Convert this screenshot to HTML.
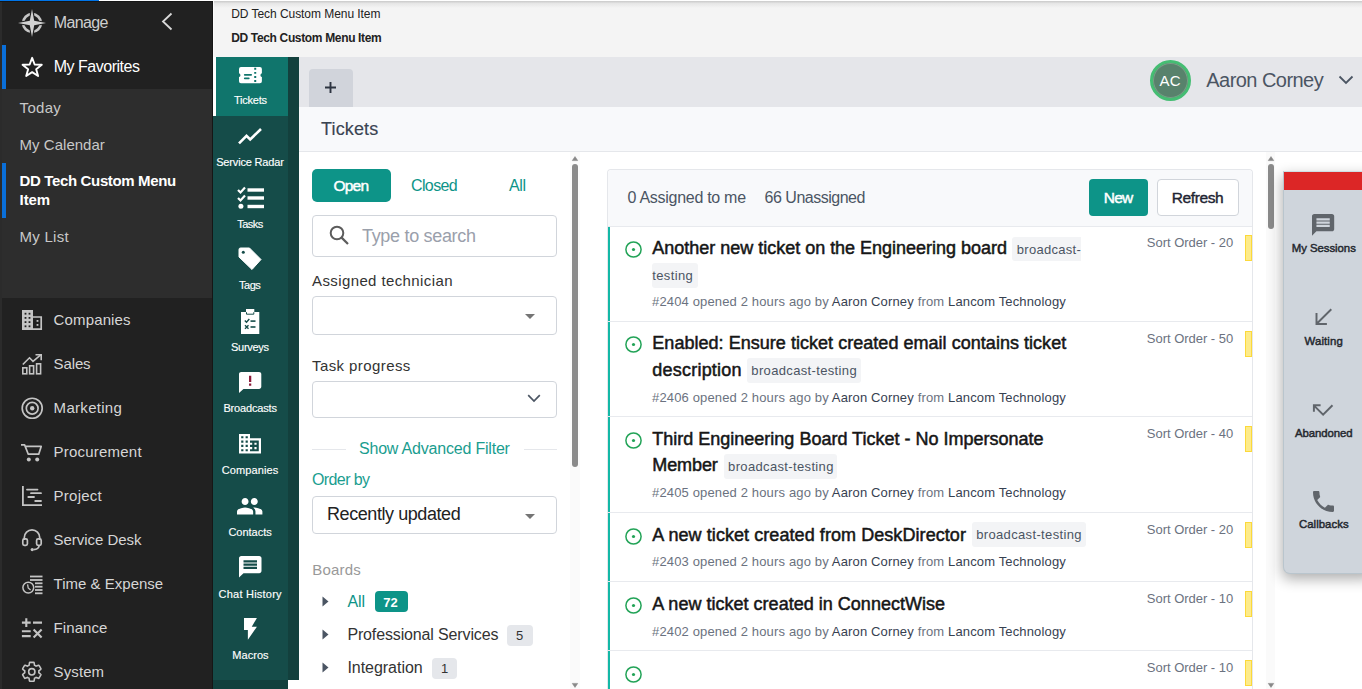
<!DOCTYPE html><html><head><meta charset="utf-8"><style>
html,body{margin:0;padding:0;width:1362px;height:689px;overflow:hidden;background:#fff}
body{position:relative;font-family:"Liberation Sans",sans-serif}
.t{position:absolute;white-space:nowrap;line-height:1}
.b{position:absolute}
svg.b{overflow:visible}
</style></head><body>
<div class="b" style="left:0px;top:0px;width:213px;height:689px;background:#212121"></div>
<div class="b" style="left:0px;top:89px;width:213px;height:209px;background:#2d2d2d"></div>
<div class="b" style="left:0px;top:0px;width:2px;height:689px;background:#2b2b2b"></div>
<div class="b" style="left:212px;top:0px;width:1px;height:689px;background:#161616"></div>
<div class="b" style="left:0px;top:0px;width:99px;height:1px;background:#0074e8"></div>
<div class="b" style="left:99px;top:0px;width:114px;height:1px;background:#ffffff"></div>
<div class="b" style="left:0px;top:1px;width:213px;height:1px;background:#161616"></div>
<svg class="b" style="left:18.2px;top:9.2px" width="28" height="28" viewBox="0 0 28 28">
<circle cx="14" cy="14" r="8.9" fill="none" stroke="#c6c6c6" stroke-width="2.6"/>
<path d="M14 0 L16.2 11.8 L28 14 L16.2 16.2 L14 28 L11.8 16.2 L0 14 L11.8 11.8 Z" fill="#d2d2d2" stroke="#212121" stroke-width="2.2" paint-order="stroke"/>
</svg>
<div class="t " style="left:53.70px;top:14.66px;font-size:16px;color:#cfcfcf;letter-spacing:-0.600px;">Manage</div>
<svg class="b" style="left:160px;top:12px" width="14" height="19" viewBox="0 0 14 19"><path d="M11.5 1.5 L3 9.5 L11.5 17.5" fill="none" stroke="#d9d9d9" stroke-width="1.8"/></svg>
<div class="b" style="left:2px;top:45px;width:4px;height:44px;background:#0a6fd9"></div>
<svg class="b" style="left:0;top:0" width="1" height="1"><path d="M32.15 57.80 L34.64 64.47 L41.76 64.78 L36.18 69.21 L38.09 76.07 L32.15 72.14 L26.21 76.07 L28.12 69.21 L22.54 64.78 L29.66 64.47Z" fill="none" stroke="#fff" stroke-width="1.9" stroke-linejoin="round"/></svg>
<div class="t " style="left:53.70px;top:58.56px;font-size:16px;color:#ffffff;letter-spacing:-0.482px;">My Favorites</div>
<div class="t " style="left:19.60px;top:100.30px;font-size:15px;color:#c8c8c8;letter-spacing:0.300px;">Today</div>
<div class="t " style="left:19.60px;top:137.30px;font-size:15px;color:#c8c8c8;letter-spacing:0.020px;">My Calendar</div>
<div class="b" style="left:2px;top:163px;width:4px;height:55px;background:#0a6fd9"></div>
<div class="t " style="left:19.60px;top:173.00px;font-size:15px;color:#ffffff;font-weight:bold;letter-spacing:-0.361px;">DD Tech Custom Menu</div>
<div class="t " style="left:19.60px;top:191.60px;font-size:15px;color:#ffffff;font-weight:bold;letter-spacing:-0.100px;">Item</div>
<div class="t " style="left:19.60px;top:228.80px;font-size:15px;color:#c8c8c8;letter-spacing:0.250px;">My List</div>
<div class="t " style="left:53.60px;top:312.10px;font-size:15px;color:#d6d6d6;letter-spacing:0.137px;">Companies</div>
<div class="t " style="left:53.60px;top:356.10px;font-size:15px;color:#d6d6d6;letter-spacing:-0.125px;">Sales</div>
<div class="t " style="left:53.60px;top:400.10px;font-size:15px;color:#d6d6d6;letter-spacing:0.300px;">Marketing</div>
<div class="t " style="left:53.60px;top:444.10px;font-size:15px;color:#d6d6d6;letter-spacing:0.210px;">Procurement</div>
<div class="t " style="left:53.60px;top:488.10px;font-size:15px;color:#d6d6d6;letter-spacing:0.233px;">Project</div>
<div class="t " style="left:53.60px;top:532.10px;font-size:15px;color:#d6d6d6;letter-spacing:-0.045px;">Service Desk</div>
<div class="t " style="left:53.60px;top:576.10px;font-size:15px;color:#d6d6d6;letter-spacing:0.008px;">Time &amp; Expense</div>
<div class="t " style="left:53.60px;top:620.10px;font-size:15px;color:#d6d6d6;letter-spacing:0.067px;">Finance</div>
<div class="t " style="left:53.60px;top:664.10px;font-size:15px;color:#d6d6d6;letter-spacing:0.100px;">System</div>
<svg class="b" style="left:22px;top:310px" width="20.00" height="20.00" viewBox="0 0 20 20" preserveAspectRatio="none"><path d="M0 0H11V20H0Z" fill="#c4c4c4"/><path d="M10.5 7H19.2V19.2H10.5" fill="none" stroke="#c4c4c4" stroke-width="1.7"/><rect x="2.6" y="2.8" width="1.8" height="1.8" fill="#212121"/><rect x="2.6" y="7" width="1.8" height="1.8" fill="#212121"/><rect x="2.6" y="11.2" width="1.8" height="1.8" fill="#212121"/><rect x="2.6" y="15.4" width="1.8" height="1.8" fill="#212121"/><rect x="6.6" y="2.8" width="1.8" height="1.8" fill="#212121"/><rect x="6.6" y="7" width="1.8" height="1.8" fill="#212121"/><rect x="6.6" y="11.2" width="1.8" height="1.8" fill="#212121"/><rect x="6.6" y="15.4" width="1.8" height="1.8" fill="#212121"/><rect x="14.6" y="10" width="1.8" height="1.8" fill="#c4c4c4"/><rect x="14.6" y="14" width="1.8" height="1.8" fill="#c4c4c4"/></svg>
<svg class="b" style="left:22px;top:353.5px" width="20.00" height="20.50" viewBox="0 0 20 20.5" preserveAspectRatio="none"><path d="M0.8 10.5 L7.5 3.8 L11 7.3 L18.7 0.9" fill="none" stroke="#c4c4c4" stroke-width="1.6"/><path d="M13.5 0.8H19.2V6.3" fill="none" stroke="#c4c4c4" stroke-width="1.6"/><rect x="0.8" y="13.8" width="4" height="6" fill="none" stroke="#c4c4c4" stroke-width="1.6"/><rect x="7.6" y="11.8" width="4" height="8" fill="none" stroke="#c4c4c4" stroke-width="1.6"/><rect x="14.6" y="9.8" width="4" height="10" fill="none" stroke="#c4c4c4" stroke-width="1.6"/></svg>
<svg class="b" style="left:21px;top:397px" width="23" height="23" viewBox="0 0 23 23"><circle cx="11.2" cy="11.25" r="10" fill="none" stroke="#c4c4c4" stroke-width="1.7"/><circle cx="11.2" cy="11.25" r="5.9" fill="none" stroke="#c4c4c4" stroke-width="1.7"/><circle cx="11.2" cy="11.25" r="2.2" fill="#c4c4c4"/></svg>
<svg class="b" style="left:21px;top:443.5px" width="21.00" height="17.50" viewBox="0 0 21 17.5" preserveAspectRatio="none"><path d="M0 0.9H3.6L7.3 10.2H17.7L20.2 2.4H4.6" fill="none" stroke="#c4c4c4" stroke-width="1.7" stroke-linejoin="round"/><circle cx="7.8" cy="15.4" r="2" fill="#c4c4c4"/><circle cx="16.2" cy="15.4" r="2" fill="#c4c4c4"/></svg>
<svg class="b" style="left:22px;top:486px" width="20.00" height="20.00" viewBox="0 0 20 20" preserveAspectRatio="none"><path d="M0.9 0V19.1H20" fill="none" stroke="#c4c4c4" stroke-width="1.8"/><path d="M5 3.6H15.5M9 7.2H19M6.3 11H12M13.2 15H19" stroke="#c4c4c4" stroke-width="1.8" stroke-linecap="round"/></svg>
<svg class="b" style="left:18px;top:525px" width="28" height="30" viewBox="18 525 28 30"><path d="M24.3 540V537.5A7.7 7.7 0 0 1 39.7 537.5V540" fill="none" stroke="#c4c4c4" stroke-width="1.7"/><rect x="22.8" y="538.8" width="4.6" height="6.6" rx="1.6" fill="none" stroke="#c4c4c4" stroke-width="1.7"/><rect x="36.6" y="538.8" width="4.6" height="6.6" rx="1.6" fill="none" stroke="#c4c4c4" stroke-width="1.7"/><path d="M39.2 545.5Q38.8 549.3 33.5 549.6" fill="none" stroke="#c4c4c4" stroke-width="1.7"/><circle cx="32.2" cy="549.6" r="1.6" fill="#c4c4c4"/><path d="M31.8 538.5V546" stroke="#c4c4c4" stroke-width="0" /></svg>
<svg class="b" style="left:18px;top:570px" width="28" height="28" viewBox="18 570 28 28"><circle cx="28.3" cy="587.6" r="5.4" fill="none" stroke="#c4c4c4" stroke-width="1.5"/><path d="M27.6 584.3L28.2 588L30.6 590" fill="none" stroke="#c4c4c4" stroke-width="1.3"/><rect x="30" y="575.6" width="12.5" height="1.8" fill="#c4c4c4"/><rect x="30" y="579.1" width="12.5" height="1.8" fill="#c4c4c4"/><rect x="35" y="582.4" width="7.5" height="1.8" fill="#c4c4c4"/><rect x="35" y="585.8000000000001" width="7.5" height="1.8" fill="#c4c4c4"/><rect x="35" y="589.1" width="7.5" height="1.8" fill="#c4c4c4"/><rect x="35" y="592.4" width="7.5" height="1.8" fill="#c4c4c4"/></svg>
<svg class="b" style="left:18px;top:612px" width="28" height="30" viewBox="18 612 28 30"><path d="M26.3 618.2V627M21.9 622.6H30.7M33 622.6H42M21.9 631.2H30.7M21.9 636.1H30.7M33.6 629.4L41.6 637.6M41.6 629.4L33.6 637.6" stroke="#c4c4c4" stroke-width="2.1"/></svg>
<svg class="b" style="left:20.2px;top:660.2px" width="23.6" height="23.6" viewBox="0 0 24 24"><path d="M19.14 12.94c.04-.3.06-.61.06-.94 0-.32-.02-.64-.07-.94l2.03-1.58c.18-.14.23-.41.12-.61l-1.92-3.32c-.12-.22-.37-.29-.59-.22l-2.39.96c-.5-.38-1.03-.7-1.62-.94l-.36-2.54c-.04-.24-.24-.41-.48-.41h-3.84c-.24 0-.43.17-.47.41l-.36 2.54c-.59.24-1.13.57-1.62.94l-2.39-.96c-.22-.08-.47 0-.59.22L2.74 8.87c-.12.21-.08.47.12.61l2.03 1.58c-.05.3-.09.63-.09.94s.02.64.07.94l-2.03 1.58c-.18.14-.23.41-.12.61l1.92 3.32c.12.22.37.29.59.22l2.39-.96c.5.38 1.03.7 1.62.94l.36 2.54c.05.24.24.41.48.41h3.84c.24 0 .44-.17.47-.41l.36-2.54c.59-.24 1.13-.56 1.62-.94l2.39.96c.22.08.47 0 .59-.22l1.92-3.32c.12-.22.07-.47-.12-.61l-2.01-1.58z" fill="none" stroke="#c4c4c4" stroke-width="1.6"/><circle cx="12" cy="12" r="3.2" fill="none" stroke="#c4c4c4" stroke-width="1.6"/></svg>
<div class="b" style="left:213px;top:0px;width:1149px;height:57px;background:#f4f4f4"></div>
<div class="b" style="left:213px;top:1px;width:1149px;height:7px;background:linear-gradient(#c9c9c9,#e6e6e6 35%,#f4f4f4)"></div>
<div class="b" style="left:213px;top:0px;width:1149px;height:1px;background:#ffffff"></div>
<div class="b" style="left:213px;top:1px;width:1px;height:56px;background:#fafafa"></div>
<div class="t " style="left:231.20px;top:7.64px;font-size:12px;color:#222;letter-spacing:-0.052px;">DD Tech Custom Menu Item</div>
<div class="t " style="left:231.20px;top:31.84px;font-size:12px;color:#222;font-weight:bold;letter-spacing:-0.343px;">DD Tech Custom Menu Item</div>
<div class="b" style="left:213px;top:57px;width:86px;height:632px;background:#13403d"></div>
<div class="b" style="left:213px;top:57px;width:75px;height:623px;background:#154c49"></div>
<div class="b" style="left:213px;top:680px;width:75px;height:9px;background:#12403d"></div>
<div class="b" style="left:288px;top:680px;width:11px;height:9px;background:#ffffff"></div>
<div class="b" style="left:213px;top:57px;width:3px;height:59px;background:#ffffff"></div>
<div class="b" style="left:216px;top:57px;width:72px;height:59px;background:#10756c"></div>
<div class="t " style="left:233.90px;top:95.29px;font-size:11px;color:#ffffff;-webkit-text-stroke:0.15px #ffffff;letter-spacing:-0.217px;">Tickets</div>
<div class="t " style="left:216.20px;top:157.49px;font-size:11px;color:#ffffff;-webkit-text-stroke:0.15px #ffffff;letter-spacing:-0.167px;">Service Radar</div>
<div class="t " style="left:237.20px;top:219.49px;font-size:11px;color:#ffffff;-webkit-text-stroke:0.15px #ffffff;letter-spacing:-0.500px;">Tasks</div>
<div class="t " style="left:239.00px;top:280.49px;font-size:11px;color:#ffffff;-webkit-text-stroke:0.15px #ffffff;letter-spacing:-0.467px;">Tags</div>
<div class="t " style="left:231.00px;top:342.19px;font-size:11px;color:#ffffff;-webkit-text-stroke:0.15px #ffffff;letter-spacing:-0.283px;">Surveys</div>
<div class="t " style="left:223.40px;top:402.79px;font-size:11px;color:#ffffff;-webkit-text-stroke:0.15px #ffffff;letter-spacing:-0.156px;">Broadcasts</div>
<div class="t " style="left:221.70px;top:464.99px;font-size:11px;color:#ffffff;-webkit-text-stroke:0.15px #ffffff;letter-spacing:0.125px;">Companies</div>
<div class="t " style="left:228.40px;top:527.49px;font-size:11px;color:#ffffff;-webkit-text-stroke:0.15px #ffffff;letter-spacing:-0.014px;">Contacts</div>
<div class="t " style="left:218.60px;top:589.19px;font-size:11px;color:#ffffff;-webkit-text-stroke:0.15px #ffffff;letter-spacing:0.218px;">Chat History</div>
<div class="t " style="left:232.30px;top:650.49px;font-size:11px;color:#ffffff;-webkit-text-stroke:0.15px #ffffff;letter-spacing:0.040px;">Macros</div>
<svg class="b" style="left:238.9px;top:67.2px" width="22.90" height="16.30" viewBox="0 0 23 16.3" preserveAspectRatio="none"><path d="M2 0H21A2 2 0 0 1 23 2V6.3A1.9 1.9 0 0 0 23 10V14.3A2 2 0 0 1 21 16.3H2A2 2 0 0 1 0 14.3V10A1.9 1.9 0 0 0 0 6.3V2A2 2 0 0 1 2 0Z" fill="#ffffff"/><path d="M5.8 7.8H12.2M5.8 11.3H9.8" stroke="#10756c" stroke-width="1.8" stroke-linecap="round"/><path d="M16.3 0.8V16" stroke="#10756c" stroke-width="2" stroke-dasharray="1.9 2.2"/></svg>
<svg class="b" style="left:238px;top:127.5px" width="24.00" height="16.50" viewBox="0 0 24 16.5" preserveAspectRatio="none"><path d="M1 15.3 L8.5 7.8 L12.2 11.5 L23 1" fill="none" stroke="#ffffff" stroke-width="2.6" stroke-linejoin="miter"/></svg>
<svg class="b" style="left:236.5px;top:186px" width="27.50" height="23.00" viewBox="0 0 27.5 23" preserveAspectRatio="none"><path d="M1 4 L3.5 6.5 L8 1.5 M1 12 L3.5 14.5 L8 9.5" fill="none" stroke="#ffffff" stroke-width="2.2"/><circle cx="3.9" cy="20.3" r="2.5" fill="#ffffff"/><rect x="10.5" y="2.3" width="16.5" height="3.4" fill="#ffffff"/><rect x="10.5" y="10.3" width="16.5" height="3.4" fill="#ffffff"/><rect x="10.5" y="18.8" width="16.5" height="3.4" fill="#ffffff"/></svg>
<svg class="b" style="left:239px;top:248px" width="22.50" height="22.00" viewBox="0 0 22.5 22" preserveAspectRatio="none"><path d="M1.5 0H10.5L22 11.5L13 21.5L0 9V1.5A1.5 1.5 0 0 1 1.5 0Z" fill="#ffffff" stroke="#ffffff" stroke-width="1" stroke-linejoin="round"/><circle cx="4.3" cy="4.3" r="1.5" fill="#154c49"/></svg>
<svg class="b" style="left:241px;top:309px" width="18.30" height="25.00" viewBox="0 0 18.3 25" preserveAspectRatio="none"><path d="M0 3H18.3V25H0Z" fill="#ffffff"/><rect x="5" y="0" width="8.3" height="5" fill="#ffffff"/><path d="M5.5 3.2V5.2H12.8V3.2" fill="none" stroke="#154c49" stroke-width="1"/><path d="M3.8 11.5 L5.5 13.3 L8.3 10" fill="none" stroke="#154c49" stroke-width="1.4"/><rect x="9.5" y="11.3" width="5" height="1.6" fill="#154c49"/><path d="M4 16.3 L7.5 19.7 M7.5 16.3 L4 19.7" stroke="#154c49" stroke-width="1.4"/><rect x="9.5" y="17.2" width="5" height="1.6" fill="#154c49"/></svg>
<svg class="b" style="left:238.9px;top:372.2px" width="22.30" height="21.10" viewBox="2 2 20 20" preserveAspectRatio="none"><path d="M20 2H4c-1.1 0-2 .9-2 2L2 22l4-4h14c1.1 0 2-.9 2-2V4c0-1.1-.9-2-2-2z" fill="#ffffff"/><path d="M11 5.5H13V11.5H11ZM11 13H13V15H11Z" fill="#8b1a3a"/></svg>
<svg class="b" style="left:239.2px;top:434px" width="22.00" height="19.50" viewBox="2 3 20 18" preserveAspectRatio="none"><path d="M12 7V3H2v18h20V7H12zM6 19H4v-2h2v2zm0-4H4v-2h2v2zm0-4H4V9h2v2zm0-4H4V5h2v2zm4 12H8v-2h2v2zm0-4H8v-2h2v2zm0-4H8V9h2v2zm0-4H8V5h2v2zm10 12h-8v-2h2v-2h-2v-2h2v-2h-2V9h8v10zm-2-8h-2v2h2v-2zm0 4h-2v2h2v-2z" fill="#ffffff"/></svg>
<svg class="b" style="left:237.3px;top:497.5px" width="25.40" height="16.50" viewBox="1 5 22 14" preserveAspectRatio="none"><path d="M16 11c1.66 0 2.99-1.34 2.99-3S17.66 5 16 5c-1.66 0-3 1.34-3 3s1.34 3 3 3zm-8 0c1.66 0 2.99-1.34 2.99-3S9.66 5 8 5C6.34 5 5 6.34 5 8s1.34 3 3 3zm0 2c-2.33 0-7 1.170-7 3.5V19h14v-2.5c0-2.33-4.67-3.5-7-3.5zm8 0c-.29 0-.62.02-.97.05 1.16.84 1.970 1.97 1.97 3.45V19h6v-2.5c0-2.330-4.67-3.5-7-3.5z" fill="#ffffff"/></svg>
<svg class="b" style="left:238.7px;top:556.4px" width="22.50" height="21.60" viewBox="2 2 20 20" preserveAspectRatio="none"><path d="M20 2H4c-1.1 0-2 .9-2 2L2 22l4-4h14c1.1 0 2-.9 2-2V4c0-1.1-.9-2-2-2zm-2 12H6v-2h12v2zm0-3H6V9h12v2zm0-3H6V6h12v2z" fill="#ffffff"/></svg>
<svg class="b" style="left:243.7px;top:618.2px" width="12.90" height="21.80" viewBox="7 2 10 20" preserveAspectRatio="none"><path d="M7 2v11h3v9l7-12h-4l4-8z" fill="#ffffff"/></svg>
<div class="b" style="left:299px;top:57px;width:1063px;height:50px;background:#e5e6ea"></div>
<div class="b" style="left:309px;top:69px;width:44px;height:38px;background:#d1d4db;border-radius:4px 4px 0 0"></div>
<svg class="b" style="left:325px;top:82px" width="11" height="11" viewBox="0 0 11 11"><path d="M5.5 0V11M0 5.5H11" stroke="#2d3441" stroke-width="1.9"/></svg>
<div class="b" style="left:1150px;top:60px;width:35px;height:35px;border:3px solid #45bd73;border-radius:50%;background:#58826c;box-shadow:inset 0 0 0 1px #7d9a88"></div>
<div class="t " style="left:1159.40px;top:73.10px;font-size:15px;color:#ffffff;letter-spacing:0.400px;">AC</div>
<div class="t " style="left:1206.30px;top:70.07px;font-size:20px;color:#4b5563;letter-spacing:-0.545px;">Aaron Corney</div>
<svg class="b" style="left:1338px;top:74px" width="16" height="12" viewBox="0 0 16 12"><path d="M1.5 2.5 L8 9 L14.5 2.5" fill="none" stroke="#4b5563" stroke-width="1.8"/></svg>
<div class="b" style="left:299px;top:107px;width:1063px;height:44px;background:#f8f9fb"></div>
<div class="b" style="left:299px;top:151px;width:1063px;height:1px;background:#e5e7eb"></div>
<div class="t " style="left:321.00px;top:120.16px;font-size:18px;color:#3b4452;-webkit-text-stroke:0.15px #3b4452;letter-spacing:0.150px;">Tickets</div>
<div class="b" style="left:299px;top:152px;width:1063px;height:537px;background:#ffffff"></div>
<div class="b" style="left:570px;top:152px;width:10px;height:537px;background:#fafafa"></div>
<div class="b" style="left:312px;top:169px;width:79px;height:33px;background:#0d9488;border-radius:5px"></div>
<div class="t " style="left:333.50px;top:178.38px;font-size:15.5px;color:#ffffff;-webkit-text-stroke:0.45px #ffffff;letter-spacing:-0.800px;">Open</div>
<div class="t " style="left:411.00px;top:177.96px;font-size:16px;color:#0d9488;letter-spacing:-0.620px;">Closed</div>
<div class="t " style="left:509.00px;top:177.96px;font-size:16px;color:#0d9488;letter-spacing:-0.400px;">All</div>
<div class="b" style="left:312px;top:215px;width:243px;height:40px;border:1px solid #d1d5db;border-radius:4px;background:#fff"></div>
<svg class="b" style="left:329px;top:225px" width="21" height="21" viewBox="0 0 21 21"><circle cx="8" cy="8" r="6.3" fill="none" stroke="#5c5c5c" stroke-width="2"/><path d="M12.6 12.6 L19 19" stroke="#5c5c5c" stroke-width="2.2"/></svg>
<div class="t " style="left:362.00px;top:226.76px;font-size:18px;color:#9aa0ab;letter-spacing:-0.315px;">Type to search</div>
<div class="t " style="left:312.00px;top:272.90px;font-size:15px;color:#333333;letter-spacing:0.394px;">Assigned technician</div>
<div class="b" style="left:312px;top:296px;width:243px;height:37px;border:1px solid #d1d5db;border-radius:4px;background:#fff"></div>
<svg class="b" style="left:524.5px;top:313.5px" width="10" height="5" viewBox="0 0 10 5"><path d="M0 0H10L5 5Z" fill="#757575"/></svg>
<div class="t " style="left:312.00px;top:358.30px;font-size:15px;color:#333333;letter-spacing:0.417px;">Task progress</div>
<div class="b" style="left:312px;top:381px;width:243px;height:35px;border:1px solid #d1d5db;border-radius:4px;background:#fff"></div>
<svg class="b" style="left:527px;top:394px" width="14" height="9" viewBox="0 0 14 9"><path d="M1.2 1.2 L7 7 L12.8 1.2" fill="none" stroke="#4b5563" stroke-width="1.7"/></svg>
<div class="b" style="left:312px;top:449px;width:34px;height:1px;background:#e5e7eb"></div>
<div class="b" style="left:524px;top:449px;width:33px;height:1px;background:#e5e7eb"></div>
<div class="t " style="left:359.00px;top:440.76px;font-size:16px;color:#1a9d8f;letter-spacing:-0.200px;">Show Advanced Filter</div>
<div class="t " style="left:312.00px;top:471.86px;font-size:16px;color:#1a9d8f;letter-spacing:-0.600px;">Order by</div>
<div class="b" style="left:312px;top:496px;width:243px;height:36px;border:1px solid #d1d5db;border-radius:4px;background:#fff"></div>
<div class="t " style="left:327.00px;top:504.76px;font-size:18px;color:#222222;letter-spacing:-0.427px;">Recently updated</div>
<svg class="b" style="left:524.5px;top:514px" width="10" height="5" viewBox="0 0 10 5"><path d="M0 0H10L5 5Z" fill="#757575"/></svg>
<div class="t " style="left:312.30px;top:561.70px;font-size:15px;color:#999999;letter-spacing:0.200px;">Boards</div>
<svg class="b" style="left:322px;top:596px" width="7" height="11" viewBox="0 0 7 11"><path d="M0.5 0.5 L6.5 5.5 L0.5 10.5Z" fill="#4b5563"/></svg>
<div class="t " style="left:347.40px;top:593.86px;font-size:16px;color:#0d9488;letter-spacing:-0.100px;">All</div>
<div class="b" style="left:374.8px;top:591.4px;width:33.2px;height:21px;background:#0d9488;border-radius:4px"></div>
<div class="t " style="left:383.30px;top:595.90px;font-size:13px;color:#fff;font-weight:bold;">72</div>
<svg class="b" style="left:322px;top:629px" width="7" height="11" viewBox="0 0 7 11"><path d="M0.5 0.5 L6.5 5.5 L0.5 10.5Z" fill="#4b5563"/></svg>
<div class="t " style="left:347.40px;top:626.86px;font-size:16px;color:#333333;letter-spacing:-0.140px;">Professional Services</div>
<div class="b" style="left:507px;top:625.4px;width:26.0px;height:21px;background:#e5e7eb;border-radius:4px"></div>
<div class="t " style="left:516.00px;top:629.40px;font-size:13px;color:#333;">5</div>
<svg class="b" style="left:322px;top:662px" width="7" height="11" viewBox="0 0 7 11"><path d="M0.5 0.5 L6.5 5.5 L0.5 10.5Z" fill="#4b5563"/></svg>
<div class="t " style="left:347.40px;top:659.86px;font-size:16px;color:#333333;letter-spacing:-0.030px;">Integration</div>
<div class="b" style="left:432px;top:658.4px;width:25.0px;height:21px;background:#e5e7eb;border-radius:4px"></div>
<div class="t " style="left:441.00px;top:662.40px;font-size:13px;color:#333;">1</div>
<svg class="b" style="left:572px;top:156px" width="6" height="5" viewBox="0 0 6 5"><path d="M0.3 4.6H5.7L3 0.6Z" fill="#888" stroke="#888" stroke-width="0.6" stroke-linejoin="round"/></svg>
<div class="b" style="left:572px;top:164px;width:6px;height:303px;background:#8a8a8a;border-radius:3px"></div>
<svg class="b" style="left:572px;top:683px" width="6" height="5" viewBox="0 0 6 5"><path d="M0.3 0.4H5.7L3 4.4Z" fill="#888" stroke="#888" stroke-width="0.6" stroke-linejoin="round"/></svg>
<div class="b" style="left:607px;top:169px;width:644px;height:520px;border:1px solid #e5e7eb;border-bottom:none;background:#fff;border-radius:4px 4px 0 0"></div>
<div class="b" style="left:608px;top:170px;width:644px;height:56px;background:#f8f9fb;border-radius:4px 4px 0 0"></div>
<div class="t " style="left:627.60px;top:189.86px;font-size:16px;color:#4b5563;letter-spacing:-0.287px;">0 Assigned to me</div>
<div class="t " style="left:764.60px;top:189.86px;font-size:16px;color:#4b5563;letter-spacing:-0.500px;">66 Unassigned</div>
<div class="b" style="left:1089px;top:179px;width:59px;height:37px;background:#0d9488;border-radius:4px"></div>
<div class="t " style="left:1103.80px;top:189.88px;font-size:15.5px;color:#ffffff;-webkit-text-stroke:0.45px #ffffff;letter-spacing:-0.750px;">New</div>
<div class="b" style="left:1157px;top:179px;width:80px;height:35px;border:1px solid #d1d5db;border-radius:4px;background:#fff"></div>
<div class="t " style="left:1171.70px;top:189.88px;font-size:15.5px;color:#1e2433;-webkit-text-stroke:0.4px #1e2433;letter-spacing:-0.383px;">Refresh</div>
<div class="b" style="left:608px;top:226px;width:644px;height:1px;background:#e8eaee"></div>
<div class="b" style="left:608px;top:227px;width:2px;height:94px;background:#14b8a6"></div>
<svg class="b" style="left:625px;top:241.0px" width="17" height="17" viewBox="0 0 17 17"><circle cx="8.5" cy="8.5" r="7.6" fill="none" stroke="#22a357" stroke-width="1.5"/><circle cx="8.5" cy="8.5" r="1.6" fill="#22a357"/></svg>
<div class="t " style="left:652.30px;top:239.36px;font-size:18px;color:#161616;letter-spacing:-0.012px;-webkit-text-stroke:0.5px #161616;">Another new ticket on the Engineering board</div>
<div class="b" style="left:1012px;top:237px;width:69px;height:23.69999999999999px;background:#f3f4f6;border-radius:3px 0 0 3px"></div>
<div class="t " style="left:1016.80px;top:242.80px;font-size:13px;color:#4b5563;letter-spacing:0.289px;">broadcast-</div>
<div class="b" style="left:652px;top:263px;width:46.0px;height:25.0px;background:#f3f4f6;border-radius:3px"></div>
<div class="t " style="left:652.20px;top:268.80px;font-size:13px;color:#4b5563;letter-spacing:0.383px;">testing</div>
<div class="t" style="left:652px;top:295.30px;font-size:13px;color:#6b7280;letter-spacing:0.15px">#2404 opened 2 hours ago by <span style="color:#374151">Aaron Corney</span> from <span style="color:#374151">Lancom Technology</span></div>
<div class="t " style="left:1146.80px;top:236.00px;font-size:13px;color:#6b7280;letter-spacing:-0.021px;">Sort Order - 20</div>
<div class="b" style="left:1245px;top:235px;width:7px;height:26px;background:#fdeb8a;border:1px solid #fcd93a;box-sizing:border-box"></div>
<div class="b" style="left:608px;top:321px;width:644px;height:1px;background:#e8eaee"></div>
<div class="b" style="left:608px;top:322px;width:2px;height:94px;background:#14b8a6"></div>
<svg class="b" style="left:625px;top:335.6px" width="17" height="17" viewBox="0 0 17 17"><circle cx="8.5" cy="8.5" r="7.6" fill="none" stroke="#22a357" stroke-width="1.5"/><circle cx="8.5" cy="8.5" r="1.6" fill="#22a357"/></svg>
<div class="t " style="left:652.30px;top:333.96px;font-size:18px;color:#161616;letter-spacing:0.033px;-webkit-text-stroke:0.5px #161616;">Enabled: Ensure ticket created email contains ticket</div>
<div class="t " style="left:652.30px;top:360.56px;font-size:18px;color:#161616;letter-spacing:0.220px;-webkit-text-stroke:0.5px #161616;">description</div>
<div class="b" style="left:746.8px;top:358.2px;width:113.9px;height:24.5px;background:#f3f4f6;border-radius:3px"></div>
<div class="t " style="left:751.30px;top:364.00px;font-size:13px;color:#4b5563;letter-spacing:0.350px;">broadcast-testing</div>
<div class="t" style="left:652px;top:390.70px;font-size:13px;color:#6b7280;letter-spacing:0.15px">#2406 opened 2 hours ago by <span style="color:#374151">Aaron Corney</span> from <span style="color:#374151">Lancom Technology</span></div>
<div class="t " style="left:1146.80px;top:332.00px;font-size:13px;color:#6b7280;letter-spacing:-0.021px;">Sort Order - 50</div>
<div class="b" style="left:1245px;top:331px;width:7px;height:26px;background:#fdeb8a;border:1px solid #fcd93a;box-sizing:border-box"></div>
<div class="b" style="left:608px;top:416px;width:644px;height:1px;background:#e8eaee"></div>
<div class="b" style="left:608px;top:417px;width:2px;height:95px;background:#14b8a6"></div>
<svg class="b" style="left:625px;top:432.0px" width="17" height="17" viewBox="0 0 17 17"><circle cx="8.5" cy="8.5" r="7.6" fill="none" stroke="#22a357" stroke-width="1.5"/><circle cx="8.5" cy="8.5" r="1.6" fill="#22a357"/></svg>
<div class="t " style="left:652.30px;top:430.36px;font-size:18px;color:#161616;-webkit-text-stroke:0.5px #161616;">Third Engineering Board Ticket - No Impersonate</div>
<div class="t " style="left:652.30px;top:456.06px;font-size:18px;color:#161616;letter-spacing:-0.100px;-webkit-text-stroke:0.5px #161616;">Member</div>
<div class="b" style="left:723.6px;top:454.2px;width:113.9px;height:24.5px;background:#f3f4f6;border-radius:3px"></div>
<div class="t " style="left:728.10px;top:460.00px;font-size:13px;color:#4b5563;letter-spacing:0.350px;">broadcast-testing</div>
<div class="t" style="left:652px;top:486.20px;font-size:13px;color:#6b7280;letter-spacing:0.15px">#2405 opened 2 hours ago by <span style="color:#374151">Aaron Corney</span> from <span style="color:#374151">Lancom Technology</span></div>
<div class="t " style="left:1146.80px;top:427.00px;font-size:13px;color:#6b7280;letter-spacing:-0.021px;">Sort Order - 40</div>
<div class="b" style="left:1245px;top:426px;width:7px;height:26px;background:#fdeb8a;border:1px solid #fcd93a;box-sizing:border-box"></div>
<div class="b" style="left:608px;top:512px;width:644px;height:1px;background:#e8eaee"></div>
<div class="b" style="left:608px;top:513px;width:2px;height:68px;background:#14b8a6"></div>
<svg class="b" style="left:625px;top:528.0px" width="17" height="17" viewBox="0 0 17 17"><circle cx="8.5" cy="8.5" r="7.6" fill="none" stroke="#22a357" stroke-width="1.5"/><circle cx="8.5" cy="8.5" r="1.6" fill="#22a357"/></svg>
<div class="t " style="left:652.30px;top:526.36px;font-size:18px;color:#161616;letter-spacing:0.068px;-webkit-text-stroke:0.5px #161616;">A new ticket created from DeskDirector</div>
<div class="b" style="left:971.7px;top:522.4px;width:113.9px;height:24.5px;background:#f3f4f6;border-radius:3px"></div>
<div class="t " style="left:976.20px;top:528.20px;font-size:13px;color:#4b5563;letter-spacing:0.350px;">broadcast-testing</div>
<div class="t" style="left:652px;top:555.00px;font-size:13px;color:#6b7280;letter-spacing:0.15px">#2403 opened 2 hours ago by <span style="color:#374151">Aaron Corney</span> from <span style="color:#374151">Lancom Technology</span></div>
<div class="t " style="left:1146.80px;top:523.00px;font-size:13px;color:#6b7280;letter-spacing:-0.021px;">Sort Order - 20</div>
<div class="b" style="left:1245px;top:522px;width:7px;height:26px;background:#fdeb8a;border:1px solid #fcd93a;box-sizing:border-box"></div>
<div class="b" style="left:608px;top:581px;width:644px;height:1px;background:#e8eaee"></div>
<div class="b" style="left:608px;top:582px;width:2px;height:68px;background:#14b8a6"></div>
<svg class="b" style="left:625px;top:596.8px" width="17" height="17" viewBox="0 0 17 17"><circle cx="8.5" cy="8.5" r="7.6" fill="none" stroke="#22a357" stroke-width="1.5"/><circle cx="8.5" cy="8.5" r="1.6" fill="#22a357"/></svg>
<div class="t " style="left:652.30px;top:595.16px;font-size:18px;color:#161616;letter-spacing:0.018px;-webkit-text-stroke:0.5px #161616;">A new ticket created in ConnectWise</div>
<div class="t" style="left:652px;top:625.30px;font-size:13px;color:#6b7280;letter-spacing:0.15px">#2402 opened 2 hours ago by <span style="color:#374151">Aaron Corney</span> from <span style="color:#374151">Lancom Technology</span></div>
<div class="t " style="left:1146.80px;top:592.00px;font-size:13px;color:#6b7280;letter-spacing:-0.021px;">Sort Order - 10</div>
<div class="b" style="left:1245px;top:591px;width:7px;height:26px;background:#fdeb8a;border:1px solid #fcd93a;box-sizing:border-box"></div>
<div class="b" style="left:608px;top:650px;width:644px;height:1px;background:#e8eaee"></div>
<div class="b" style="left:608px;top:651px;width:2px;height:39px;background:#14b8a6"></div>
<svg class="b" style="left:625px;top:665.8px" width="17" height="17" viewBox="0 0 17 17"><circle cx="8.5" cy="8.5" r="7.6" fill="none" stroke="#22a357" stroke-width="1.5"/><circle cx="8.5" cy="8.5" r="1.6" fill="#22a357"/></svg>
<div class="t " style="left:1146.80px;top:661.00px;font-size:13px;color:#6b7280;letter-spacing:-0.021px;">Sort Order - 10</div>
<div class="b" style="left:1245px;top:660px;width:7px;height:26px;background:#fdeb8a;border:1px solid #fcd93a;box-sizing:border-box"></div>
<div class="b" style="left:1266px;top:152px;width:9px;height:537px;background:#fafafa"></div>
<svg class="b" style="left:1268px;top:156px" width="6" height="5" viewBox="0 0 6 5"><path d="M0.3 4.6H5.7L3 0.6Z" fill="#888" stroke="#888" stroke-width="0.6" stroke-linejoin="round"/></svg>
<div class="b" style="left:1268px;top:164px;width:6px;height:65px;background:#8a8a8a;border-radius:3px"></div>
<svg class="b" style="left:1268px;top:683px" width="6" height="5" viewBox="0 0 6 5"><path d="M0.3 0.4H5.7L3 4.4Z" fill="#888" stroke="#888" stroke-width="0.6" stroke-linejoin="round"/></svg>
<div class="b" style="left:1283px;top:171px;width:90px;height:401px;background:#cfd5dc;border:1px solid #b9c5cd;border-top-color:#cfdde3;border-radius:0 0 7px 7px;box-shadow:-1px 5px 14px rgba(0,0,0,0.32)"></div>
<div class="b" style="left:1284px;top:172px;width:90px;height:18px;background:#dc2626"></div>
<div class="t " style="left:1291.70px;top:242.65px;font-size:11.4px;color:#23272e;-webkit-text-stroke:0.45px #23272e;letter-spacing:-0.040px;">My Sessions</div>
<div class="t " style="left:1304.50px;top:335.65px;font-size:11.4px;color:#23272e;-webkit-text-stroke:0.45px #23272e;letter-spacing:0.117px;">Waiting</div>
<div class="t " style="left:1295.00px;top:427.85px;font-size:11.4px;color:#23272e;-webkit-text-stroke:0.45px #23272e;letter-spacing:-0.100px;">Abandoned</div>
<div class="t " style="left:1299.00px;top:519.35px;font-size:11.4px;color:#23272e;-webkit-text-stroke:0.45px #23272e;letter-spacing:0.025px;">Callbacks</div>
<svg class="b" style="left:1312.4px;top:213.5px" width="22.20" height="21.70" viewBox="2 2 20 20" preserveAspectRatio="none"><path d="M20 2H4c-1.1 0-2 .9-2 2L2 22l4-4h14c1.1 0 2-.9 2-2V4c0-1.1-.9-2-2-2zm-2 12H6v-2h12v2zm0-3H6V9h12v2zm0-3H6V6h12v2z" fill="#60656b"/></svg>
<svg class="b" style="left:1310px;top:305px" width="26" height="24" viewBox="0 0 26 24"><path d="M21.3 4.2L7.2 18.3M6.5 8V18.9H16.9" fill="none" stroke="#60656b" stroke-width="1.95"/></svg>
<svg class="b" style="left:1310px;top:400px" width="26" height="20" viewBox="0 0 26 20"><path d="M22.5 5.2L13.1 14.7L4.5 6.1M3.9 11.8V5.3H10.6" fill="none" stroke="#60656b" stroke-width="1.95"/></svg>
<svg class="b" style="left:1313px;top:491px" width="21.00" height="21.00" viewBox="3 3 18 18" preserveAspectRatio="none"><path d="M6.62 10.79c1.44 2.83 3.76 5.14 6.590 6.59l2.2-2.2c.27-.27.67-.36 1.02-.24 1.12.37 2.33.57 3.57.57.55 0 1 .45 1 1V20c0 .55-.45 1-1 1-9.39 0-17-7.61-17-17 0-.55.45-1 1-1h3.5c.55 0 1 .45 1 1 0 1.25.2 2.45.57 3.57.11.35.03.74-.25 1.02l-2.2 2.2z" fill="#60656b"/></svg>
</body></html>
